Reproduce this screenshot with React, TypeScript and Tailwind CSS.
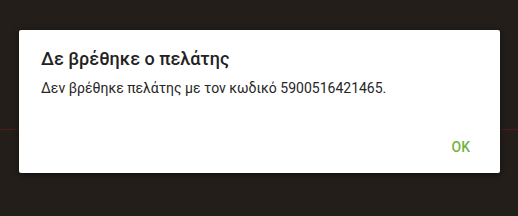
import React from 'react';

const App: React.FC = () => {
  return (
    <div
      className="relative w-[518px] h-[216px] overflow-hidden bg-[#231e1a]"
      style={{ fontFamily: 'Roboto, "Noto Sans", sans-serif' }}
    >
      {/* faint red rule from the screen behind the dialog */}
      <div className="absolute left-0 right-0 top-[129px] h-px bg-[#4f1a17]" />

      <div className="relative ml-[19px] mt-[30px] w-[481px] rounded-[2px] bg-white shadow-[0_2px_6px_rgba(0,0,0,0.5)] px-[22px] pt-[17px] pb-[16px]">
        <h2 className="text-[18px] leading-[24px] font-medium text-[#222222]">
          Δε βρέθηκε ο πελάτης
        </h2>
        <p className="mt-[7px] text-[14px] leading-[20px] text-[#262626]">
          Δεν βρέθηκε πελάτης με τον κωδικό 5900516421465.
        </p>
        <div className="mt-[39px] flex justify-end pr-[8px]">
          <button className="text-[14px] leading-[20px] font-medium uppercase text-[#76b244]">
            OK
          </button>
        </div>
      </div>
    </div>
  );
};

export default App;
